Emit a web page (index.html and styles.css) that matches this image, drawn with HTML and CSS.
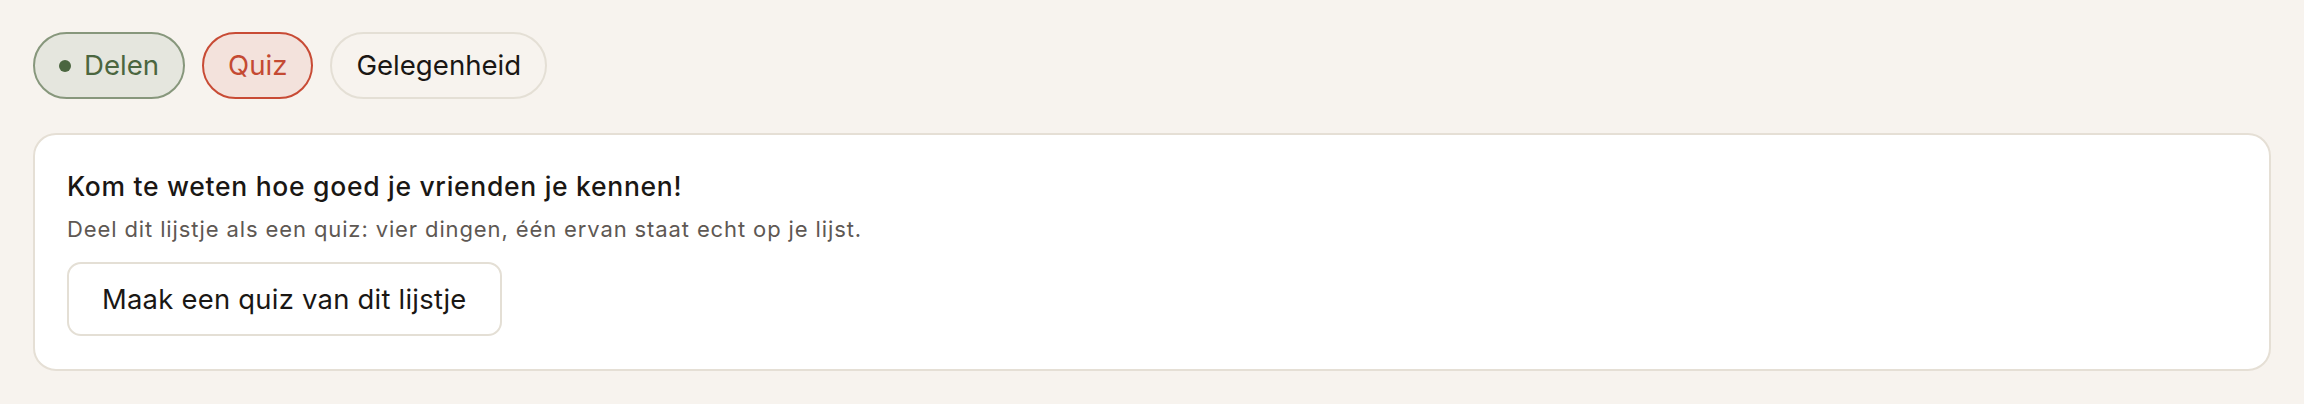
FILE: index.html
```html
<!DOCTYPE html>
<html>
    <head>
        <link rel="stylesheet" href="styles.css">
    </head>
    <body>
        <div class="page">
            <div class="tabs">
                <a href="#" class="tab tab-share"><span class="tab-dot"></span>Delen</a>
                <a href="#" class="tab tab-quiz">Quiz</a>
                <a href="#" class="tab">Gelegenheid</a>
            </div>

            <div class="panel">
                <h2 class="panel-title">Kom te weten hoe goed je vrienden je kennen!</h2>
                <p class="panel-text">
                    Deel dit lijstje als een quiz: vier dingen, één ervan staat echt op je lijst.
                </p>
                <div>
                    <a href="#" class="panel-button">Maak een quiz van dit lijstje</a>
                </div>
            </div>
        </div>
    </body>
</html>
```

FILE: styles.css
```css
* {
    margin: 0;
    padding: 0;
    box-sizing: border-box;
    font-family: Inter, 'Noto Sans', 'Liberation Sans', sans-serif;
}

body {
    background: #f7f3ee;
    color: #1a1714;
}

.page {
    padding: 32px 33px 34px 33px;
}

.tabs {
    display: flex;
    gap: 17px;
    margin-bottom: 34px;
}

.tab {
    display: inline-flex;
    align-items: center;
    gap: 13px;
    height: 67px;
    padding: 0 24px;
    border: 2px solid #e4dfd5;
    border-radius: 34px;
    font-size: 27.6px;
    line-height: 1.5;
    color: #1a1714;
    text-decoration: none;
}

.tab-share {
    background: #e5e6de;
    border-color: #87977c;
    color: #4b6640;
}

.tab-dot {
    width: 12px;
    height: 12px;
    border-radius: 50%;
    background: #4b6640;
}

.tab-quiz {
    background: #f3e2dc;
    border-color: #c84b35;
    color: #c44a33;
}

.panel {
    background: #fff;
    border: 2px solid #e5dfd5;
    border-radius: 23px;
    padding: 32px 32px 33px 32px;
}

.panel-title {
    font-size: 26.5px;
    font-weight: 500;
    letter-spacing: 0.7px;
    line-height: 39px;
    color: #1a1714;
    margin-bottom: 7px;
}

.panel-text {
    font-size: 22px;
    letter-spacing: 0.88px;
    line-height: 32px;
    color: #5e5853;
    margin-bottom: 17px;
}

.panel-button {
    display: inline-block;
    padding: 14px 33px;
    border: 2px solid #e4dfd5;
    border-radius: 14px;
    background: #fff;
    font-size: 27.4px;
    letter-spacing: 0.25px;
    line-height: 42px;
    color: #1a1714;
    text-decoration: none;
}
```
